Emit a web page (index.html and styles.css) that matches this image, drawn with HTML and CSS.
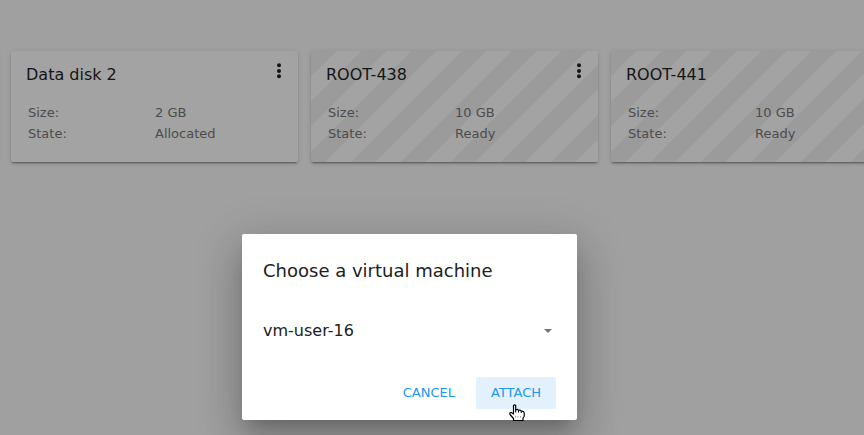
FILE: index.html
```html
<!DOCTYPE html>
<html lang="en">
<head>
<meta charset="utf-8">
<title>Volumes</title>
<link rel="stylesheet" href="styles.css">
</head>
<body>
<main class="volumes">
  <article class="card"></article>
  <article class="card">
    <header class="card-head"><h2>Data disk 2</h2>
      <svg class="more" width="6" height="16" viewBox="0 0 6 16"><circle cx="3" cy="2.3" r="2"/><circle cx="3" cy="7.9" r="2"/><circle cx="3" cy="13.3" r="2"/></svg></header>
    <dl><dt>Size:</dt><dd>2 GB</dd><dt>State:</dt><dd>Allocated</dd></dl>
  </article>
  <article class="card striped">
    <header class="card-head"><h2>ROOT-438</h2>
      <svg class="more" width="6" height="16" viewBox="0 0 6 16"><circle cx="3" cy="2.3" r="2"/><circle cx="3" cy="7.9" r="2"/><circle cx="3" cy="13.3" r="2"/></svg></header>
    <dl><dt>Size:</dt><dd>10 GB</dd><dt>State:</dt><dd>Ready</dd></dl>
  </article>
  <article class="card striped">
    <header class="card-head"><h2>ROOT-441</h2></header>
    <dl><dt>Size:</dt><dd>10 GB</dd><dt>State:</dt><dd>Ready</dd></dl>
  </article>
</main>
<section class="dialog" role="dialog">
  <h1>Choose a virtual machine</h1>
  <div class="select"><span>vm-user-16</span><i class="arrow"></i></div>
  <div class="actions"><button>CANCEL</button><button class="active">ATTACH</button></div>
  <svg class="cursor" width="17" height="18" viewBox="0 0 17 18">
    <path d="M4.5 1.5Q5.5.2 6.7 1.5V6Q8.5 4.8 9.5 6.3Q11.3 5.5 12.3 7.2Q14.8 6.7 15.2 9V12.5L14 14V16.5H4.5V14.5L1 10.5Q.3 8.3 2.3 8.5L4.5 10Z" fill="#fff" stroke="#000" stroke-width="1.2" stroke-linejoin="round"/>
    <path d="M6.7 6V8.5M9.5 6.5V8.5M12.3 7.5V9" stroke="#000" fill="none"/>
    <path d="M6.5 12V13.5M9 12V13.5M11.5 12V13.5" stroke="#999" fill="none"/>
  </svg>
</section>
</body>
</html>
```
FILE: styles.css
```css
* { box-sizing: border-box; }

body {
  margin: 0;
  height: 435px;
  overflow: hidden;
  background: #a0a0a0;
  font-family: "DejaVu Sans", sans-serif;
}

h1, h2, dl, dd { margin: 0; font-weight: 400; }

.volumes {
  display: flex;
  gap: 13px;
  margin-left: -289px;
  padding-top: 51px;
}

.card {
  flex: 0 0 287px;
  height: 111px;
  padding: 11px 15px;
  border-radius: 2px;
  background-color: #a3a3a3;
  box-shadow: 0 3px 1px -2px rgba(0, 0, 0, .2), 0 2px 2px rgba(0, 0, 0, .14), 0 1px 5px rgba(0, 0, 0, .12);
}

.striped {
  background-image: repeating-linear-gradient(135deg, #9b9b9b 0, #9b9b9b 17.9px, #a3a3a3 17.9px, #a3a3a3 35.36px);
}

.card-head { display: flex; justify-content: space-between; height: 40px; }
.card-head h2 { font-size: 16px; line-height: 26px; color: #151515; }
.more { margin-top: 1px; margin-right: 1px; fill: #151515; }

dl {
  display: grid;
  grid-template-columns: 127px 1fr;
  padding-left: 2px;
  font-size: 13px;
  line-height: 21px;
  color: #4c4c4c;
}

.dialog {
  position: absolute;
  left: 242px;
  top: 234px;
  width: 335px;
  height: 186px;
  padding: 24px 21px 11px;
  border-radius: 2px;
  background: #fff;
  color: #212121;
  box-shadow: 0 11px 15px -7px rgba(0, 0, 0, .2), 0 24px 38px 3px rgba(0, 0, 0, .14), 0 9px 46px 8px rgba(0, 0, 0, .12);
}

.dialog h1 { font-size: 18px; line-height: 25px; }

.select {
  display: flex;
  align-items: center;
  justify-content: space-between;
  height: 24px;
  margin-top: 35px;
  padding-right: 4px;
  font-size: 16px;
}

.arrow {
  margin-top: 2px;
  border: 4px solid transparent;
  border-top-color: #757575;
  border-bottom: 0;
}

.actions { display: flex; justify-content: flex-end; gap: 6px; margin-top: 35px; }

button {
  height: 32px;
  padding: 0 15px 2px;
  border: 0;
  border-radius: 2px;
  background: none;
  color: #2196f3;
  font: 13px "DejaVu Sans", sans-serif;
}

.active { width: 80px; background: #e3f1fd; }

.cursor { position: absolute; left: 267px; top: 170px; }
```
